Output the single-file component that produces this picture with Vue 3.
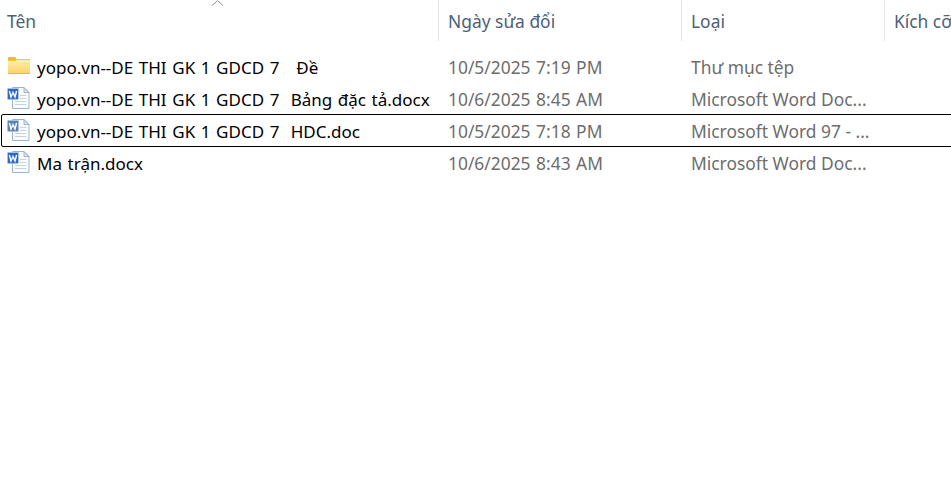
<script setup>
const files = [
  { name: 'yopo.vn--DE THI GK 1 GDCD 7   Đề', date: '10/5/2025 7:19 PM', type: 'Thư mục tệp', icon: 'folder' },
  { name: 'yopo.vn--DE THI GK 1 GDCD 7  Bảng đặc tả.docx', date: '10/6/2025 8:45 AM', type: 'Microsoft Word Doc...', icon: 'docx' },
  { name: 'yopo.vn--DE THI GK 1 GDCD 7  HDC.doc', date: '10/5/2025 7:18 PM', type: 'Microsoft Word 97 - ...', icon: 'doc', focused: true },
  { name: 'Ma trận.docx', date: '10/6/2025 8:43 AM', type: 'Microsoft Word Doc...', icon: 'docx' },
]
</script>

<template>
  <div class="explorer">
    <div class="header">
      <div class="head-cell name-col">
        Tên
        <svg class="sort" width="13" height="6" viewBox="0 0 13 6">
          <path d="M1 5.5 L6.5 0.7 L12 5.5" fill="none" stroke="#8f8f8f" stroke-width="1" />
        </svg>
      </div>
      <div class="head-cell date-col">Ngày sửa đổi</div>
      <div class="head-cell type-col">Loại</div>
      <div class="head-cell size-col">Kích cỡ</div>
    </div>

    <div class="rows">
      <div v-for="f in files" :key="f.name + f.date" class="row" :class="{ focused: f.focused }">
        <div class="name-col name-cell">
          <svg v-if="f.icon === 'folder'" class="icon" width="24" height="24" viewBox="0 0 24 24">
            <defs>
              <linearGradient id="folderFill" x1="0" y1="0" x2="0" y2="1">
                <stop offset="0" stop-color="#ffeeb0" />
                <stop offset="1" stop-color="#fdd263" />
              </linearGradient>
            </defs>
            <path d="M1 3 Q1 2 2 2 H8 L9.5 3.5 V6 H1 Z" fill="#f5b92d" />
            <path d="M1 5 H23 V19 H1 Z" fill="url(#folderFill)" />
            <path d="M1 5.5 H9 L10 4.5 H23" fill="none" stroke="#f6c445" stroke-width="1" />
            <path d="M1 18.5 H23" stroke="#edb53a" stroke-width="1" />
          </svg>
          <svg v-else class="icon" width="24" height="24" viewBox="0 0 24 24">
            <path d="M5.5 0.5 H17 L22 5.5 V21.5 H5.5 Z" fill="#fbfcfe" stroke="#9db3cc" stroke-width="1" />
            <path d="M17 0.5 V5.5 H22 Z" fill="#d7e3f1" stroke="#9db3cc" stroke-width="1" />
            <path d="M13 8.5 H19.5 M13 11.5 H19.5 M8 14.5 H19.5 M8 17.5 H19.5" stroke="#c3d2e3" stroke-width="1" />
            <rect x="0.5" y="1.5" width="11" height="11" rx="1" :fill="f.icon === 'doc' ? '#5f82b4' : '#2f69c6'" stroke="#a9c2e4" />
            <path d="M2.4 4 L4 10 L6 5.5 L8 10 L9.6 4" fill="none" stroke="#ffffff" stroke-width="1.4" />
          </svg>
          <span class="file-name">{{ f.name }}</span>
        </div>
        <div class="date-col cell date-cell">{{ f.date }}</div>
        <div class="type-col cell">{{ f.type }}</div>
        <div class="size-col cell"></div>
      </div>
    </div>
  </div>
</template>

<style scoped>
.explorer {
  width: 951px;
  height: 477px;
  overflow: hidden;
  background: #ffffff;
  font-family: "Noto Sans", "Open Sans", sans-serif;
  font-size: 17.4px;
}

.header {
  display: flex;
  height: 41px;
}

.head-cell {
  position: relative;
  display: flex;
  align-items: center;
  height: 100%;
  box-sizing: border-box;
  padding: 0 0 0 9px;
  color: #4c607a;
  border-left: 1px solid #e5e5e5;
  white-space: nowrap;
}

.head-cell.name-col {
  border-left: none;
  padding-left: 7px;
}

.sort {
  position: absolute;
  top: 0;
  left: 211px;
}

.name-col {
  width: 438px;
  flex: none;
}

.date-col {
  width: 243px;
  flex: none;
}

.type-col {
  width: 203px;
  flex: none;
}

.size-col {
  width: 120px;
  flex: none;
}

.rows {
  padding-top: 10px;
  display: flex;
  flex-direction: column;
  width: 1004px;
}

.row {
  position: relative;
  display: flex;
  align-items: center;
  height: 32px;
}

.row.focused::after {
  content: "";
  position: absolute;
  top: -1px;
  left: 1px;
  right: 0;
  bottom: 0;
  border: 1px solid #000000;
  border-radius: 2px;
}

.name-cell {
  display: flex;
  align-items: center;
  padding-left: 7px;
  box-sizing: border-box;
}

.icon {
  flex: none;
  margin-right: 6px;
}

.file-name {
  color: #000000;
  white-space: pre;
  font-size: 17px;
  word-spacing: 1.2px;
}

.cell {
  box-sizing: border-box;
  padding-left: 10px;
  color: #6d6d6d;
  white-space: pre;
}

.date-cell {
  word-spacing: 1px;
}
</style>
